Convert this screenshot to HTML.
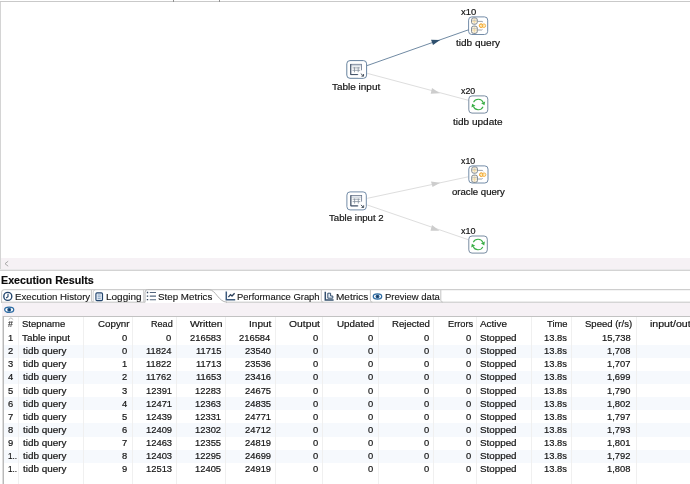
<!DOCTYPE html>
<html><head><meta charset="utf-8"><title>Execution Results</title>
<style>
html,body{margin:0;padding:0;background:#fff;}
body{width:690px;height:484px;position:relative;overflow:hidden;font-family:"Liberation Sans", sans-serif;}
.t{position:absolute;white-space:nowrap;transform-origin:0 50%;display:block;-webkit-text-stroke:0.18px currentColor;}
.abs{position:absolute;}
.vs{position:absolute;top:317px;width:1px;height:167px;background:#f0f0f0;}
.rb{position:absolute;left:4px;width:686px;background:#f6f9fd;}
svg{position:absolute;left:0;top:0;}
</style></head><body>
<div class="abs" style="left:0;top:1px;width:690px;height:1px;background:#c9c9c9"></div>
<div class="abs" style="left:0;top:2px;width:1px;height:268px;background:#d4d4d4"></div>
<div class="abs" style="left:173px;top:0;width:1px;height:2px;background:#8f8f8f"></div>
<div class="abs" style="left:219px;top:0;width:1px;height:2px;background:#8f8f8f"></div>
<div class="abs" style="left:1px;top:258px;width:689px;height:11px;background:#f6f1f5"></div>
<div class="abs" style="left:0;top:269px;width:690px;height:1px;background:#e9e8ea"></div><div class="abs" style="left:0;top:270px;width:690px;height:1px;background:#d3d3d3"></div>
<div class="abs" style="left:2px;top:303px;width:688px;height:13px;background:#f6f1f5"></div>
<div class="abs" style="left:2px;top:316px;width:688px;height:1px;background:#c2c2c2"></div>
<div class="abs" style="left:2px;top:316px;width:1px;height:168px;background:#dedede"></div><div class="abs" style="left:3px;top:316px;width:1px;height:168px;background:#b9b9b9"></div>
<div class="rb" style="top:344.55px;height:13.15px"></div><div class="rb" style="top:370.85px;height:13.15px"></div><div class="rb" style="top:397.15px;height:13.15px"></div><div class="rb" style="top:423.45px;height:13.15px"></div><div class="rb" style="top:449.75px;height:13.15px"></div>
<div class="vs" style="left:18.0px"></div><div class="vs" style="left:82.9px"></div><div class="vs" style="left:132.4px"></div><div class="vs" style="left:175.7px"></div><div class="vs" style="left:225.1px"></div><div class="vs" style="left:274.7px"></div><div class="vs" style="left:322.3px"></div><div class="vs" style="left:377.9px"></div><div class="vs" style="left:433.3px"></div><div class="vs" style="left:475.7px"></div><div class="vs" style="left:531.4px"></div><div class="vs" style="left:571.2px"></div><div class="vs" style="left:635.7px"></div>
<svg width="690" height="484" viewBox="0 0 690 484">
<line x1="367.1" y1="65.6" x2="468.8" y2="29.7" stroke="#607d98" stroke-width="0.9"/><polygon points="440.1,40.0 431.0,39.7 433.0,45.1" fill="#2f506e"/><line x1="367.4" y1="73.4" x2="468.8" y2="100.4" stroke="#dedede" stroke-width="1.0"/><polygon points="432.0,88.0 439.9,93.2 430.7,93.8" fill="#cdcdcd"/><line x1="367.4" y1="198.3" x2="468.3" y2="176.8" stroke="#dedede" stroke-width="1.0"/><polygon points="431.0,181.5 440.3,182.7 432.5,186.9" fill="#cdcdcd"/><line x1="367.4" y1="205.0" x2="468.3" y2="239.7" stroke="#dedede" stroke-width="1.0"/><polygon points="432.0,225.0 439.4,230.7 430.5,230.8" fill="#cdcdcd"/><rect x="346.80" y="60.60" width="19.80" height="17.70" rx="3.2" ry="3.2" fill="#fff" stroke="#66829f" stroke-width="1.0"/><g transform="translate(346.30,60.10)"><rect x="4.45" y="4.2" width="10.8" height="10.3" fill="#fff" stroke="#66748a" stroke-width="0.8"/><path d="M4.9 5.7H14.8" stroke="#aab6c4" stroke-width="0.8" fill="none"/><path d="M8.2 7.1V12.2 M11.9 7.1V12.2 M6.2 7.8H13.9 M6.2 10.2H13.9" stroke="#7d8997" stroke-width="0.75" fill="none"/><path d="M4.45 4.0V14.5H11.4" stroke="#3f4e63" stroke-width="0.95" fill="none"/><rect x="11.9" y="12.4" width="6" height="5" fill="#fff"/><rect x="14.6" y="10.2" width="2" height="4" fill="#fff"/><path d="M14.5 13.5L17.0 15.8 M17.25 13.9V16.05H15.1" stroke="#2e3a48" stroke-width="0.85" fill="none"/></g><rect x="346.90" y="191.90" width="19.40" height="18.00" rx="3.2" ry="3.2" fill="#fff" stroke="#738ca8" stroke-width="1.0"/><g transform="translate(346.40,191.40)"><rect x="4.45" y="4.2" width="10.8" height="10.3" fill="#fff" stroke="#66748a" stroke-width="0.8"/><path d="M4.9 5.7H14.8" stroke="#aab6c4" stroke-width="0.8" fill="none"/><path d="M8.2 7.1V12.2 M11.9 7.1V12.2 M6.2 7.8H13.9 M6.2 10.2H13.9" stroke="#7d8997" stroke-width="0.75" fill="none"/><path d="M4.45 4.0V14.5H11.4" stroke="#3f4e63" stroke-width="0.95" fill="none"/><rect x="11.9" y="12.4" width="6" height="5" fill="#fff"/><rect x="14.6" y="10.2" width="2" height="4" fill="#fff"/><path d="M14.5 13.5L17.0 15.8 M17.25 13.9V16.05H15.1" stroke="#2e3a48" stroke-width="0.85" fill="none"/></g><rect x="468.60" y="16.90" width="19.10" height="17.60" rx="3.2" ry="3.2" fill="#fff" stroke="#738ca8" stroke-width="1.0"/><g transform="translate(468.10,16.40)"><rect x="3.45" y="1.5" width="5.7" height="6.3" rx="2.2" ry="1.7" fill="#fbf2df" stroke="#7d8792" stroke-width="1.0"/><path d="M6.3 2.7V6.8 M4.3 4.95H8.3" stroke="#f1d8a0" stroke-width="0.9"/><path d="M3.6 3.5Q6.3 4.7 9.0 3.5" stroke="#a9b0b8" stroke-width="0.6" fill="none"/><rect x="3.45" y="9.7" width="5.7" height="7.3" rx="2.2" ry="1.7" fill="#fbf2df" stroke="#7d8792" stroke-width="1.0"/><path d="M6.3 10.899999999999999V16.0 M4.3 13.65H8.3" stroke="#f1d8a0" stroke-width="0.9"/><path d="M3.6 11.7Q6.3 12.899999999999999 9.0 11.7" stroke="#a9b0b8" stroke-width="0.6" fill="none"/><path d="M9.8 5.0H14.0L14.9 5.8 M9.8 13.6H13.6L14.4 13.0" stroke="#878d95" stroke-width="0.8" fill="none"/><ellipse cx="13.0" cy="9.3" rx="1.75" ry="1.8" fill="#fdf1c8" stroke="#f4ab3a" stroke-width="0.85"/><ellipse cx="15.8" cy="9.3" rx="1.75" ry="1.8" fill="#fdf1c8" stroke="#f4ab3a" stroke-width="0.85"/><ellipse cx="13.0" cy="9.3" rx="1.75" ry="1.8" fill="none" stroke="#f4ab3a" stroke-width="0.85"/></g><rect x="468.80" y="165.90" width="19.20" height="17.10" rx="3.2" ry="3.2" fill="#fff" stroke="#738ca8" stroke-width="1.0"/><g transform="translate(468.30,165.40)"><rect x="3.45" y="1.5" width="5.7" height="6.3" rx="2.2" ry="1.7" fill="#fbf2df" stroke="#7d8792" stroke-width="1.0"/><path d="M6.3 2.7V6.8 M4.3 4.95H8.3" stroke="#f1d8a0" stroke-width="0.9"/><path d="M3.6 3.5Q6.3 4.7 9.0 3.5" stroke="#a9b0b8" stroke-width="0.6" fill="none"/><rect x="3.45" y="9.7" width="5.7" height="7.3" rx="2.2" ry="1.7" fill="#fbf2df" stroke="#7d8792" stroke-width="1.0"/><path d="M6.3 10.899999999999999V16.0 M4.3 13.65H8.3" stroke="#f1d8a0" stroke-width="0.9"/><path d="M3.6 11.7Q6.3 12.899999999999999 9.0 11.7" stroke="#a9b0b8" stroke-width="0.6" fill="none"/><path d="M9.8 5.0H14.0L14.9 5.8 M9.8 13.6H13.6L14.4 13.0" stroke="#878d95" stroke-width="0.8" fill="none"/><ellipse cx="13.0" cy="9.3" rx="1.75" ry="1.8" fill="#fdf1c8" stroke="#f4ab3a" stroke-width="0.85"/><ellipse cx="15.8" cy="9.3" rx="1.75" ry="1.8" fill="#fdf1c8" stroke="#f4ab3a" stroke-width="0.85"/><ellipse cx="13.0" cy="9.3" rx="1.75" ry="1.8" fill="none" stroke="#f4ab3a" stroke-width="0.85"/></g><rect x="468.80" y="95.90" width="19.00" height="17.20" rx="3.2" ry="3.2" fill="#fff" stroke="#788ca2" stroke-width="1.0"/><path d="M473.54 102.18A5.3 5.3 0 0 1 483.21 102.51" stroke="#3aae46" stroke-width="1.05" fill="none"/><polygon points="484.48,105.36 485.15,101.45 481.13,103.24" fill="#3aae46"/><path d="M483.06 106.82A5.3 5.3 0 0 1 473.39 106.49" stroke="#3aae46" stroke-width="1.05" fill="none"/><polygon points="472.12,103.64 471.45,107.55 475.47,105.76" fill="#3aae46"/><rect x="468.80" y="236.00" width="18.50" height="17.10" rx="3.2" ry="3.2" fill="#fff" stroke="#788ca2" stroke-width="1.0"/><path d="M473.29 242.23A5.3 5.3 0 0 1 482.96 242.56" stroke="#3aae46" stroke-width="1.05" fill="none"/><polygon points="484.23,245.41 484.90,241.50 480.88,243.29" fill="#3aae46"/><path d="M482.81 246.87A5.3 5.3 0 0 1 473.14 246.54" stroke="#3aae46" stroke-width="1.05" fill="none"/><polygon points="471.87,243.69 471.20,247.60 475.22,245.81" fill="#3aae46"/><path d="M8.2 261.2L5.0 263.7L8.2 266.2" stroke="#a0a0a0" stroke-width="0.9" fill="none"/>
<path d="M1.6 303V292.2Q1.6 289.7 4.2 289.7H690" stroke="#c3c3c3" stroke-width="1" fill="none"/><path d="M1.6 302.2H145 M226 302.2H690" stroke="#c3c3c3" stroke-width="1" fill="none"/><path d="M91.4 290V300.2Q91.4 302.2 93.4 302.2" stroke="#c3c3c3" stroke-width="1" fill="none"/><path d="M321.3 290V300.2Q321.3 302.2 323.3 302.2" stroke="#c3c3c3" stroke-width="1" fill="none"/><path d="M370.4 290V300.2Q370.4 302.2 372.4 302.2" stroke="#c3c3c3" stroke-width="1" fill="none"/><path d="M440.8 290V300.2Q440.8 302.2 442.8 302.2" stroke="#c3c3c3" stroke-width="1" fill="none"/><path d="M93.2 302V292Q93.2 290 95.2 290" stroke="#c3c3c3" stroke-width="0.8" fill="none"/><path d="M145 302.4V292.4Q145 289.7 147.6 289.7H209C216 289.7 218 301.8 227 302.2" stroke="#b4b4b4" stroke-width="1" fill="#fff"/><path d="M143.6 290V302" stroke="#c3c3c3" stroke-width="0.8"/><circle cx="7.8" cy="296.4" r="4.0" fill="#fff" stroke="#24466e" stroke-width="1.4"/><path d="M8.0 293.8V296.7L6.1 298.0" stroke="#24466e" stroke-width="1.1" fill="none"/><rect x="95.9" y="292.8" width="6.6" height="7.8" rx="1.1" fill="#e6eef7" stroke="#24466e" stroke-width="1.15"/><path d="M97.7 295H100.7 M97.7 296.8H100.7 M97.7 298.6H100.7" stroke="#6f8fb5" stroke-width="0.8"/><path d="M149.8 292.5H156 M149.8 296.1H156 M149.8 299.7H156" stroke="#52657d" stroke-width="1.1"/><path d="M146.8 292.5H148.2 M146.8 296.1H148.2 M146.8 299.7H148.2" stroke="#33465e" stroke-width="1.3"/><path d="M226.3 291.6V299.7H235.2" stroke="#3c5a7d" stroke-width="1.5" fill="none"/><path d="M228.4 297.2L230.5 294.6L232 296L234.6 293.2" stroke="#2a3f5a" stroke-width="1.25" fill="none"/><path d="M325.3 291.8V300.1H333.6" stroke="#35506f" stroke-width="1.5" fill="none"/><path d="M327.8 293.2H330.6V296H332.8V298.2H327.8Z" fill="#e4edf6" stroke="#35506f" stroke-width="1.0"/><ellipse cx="377.5" cy="296.5" rx="4.2" ry="2.6" fill="#fff" stroke="#2e6da4" stroke-width="1.3"/><circle cx="377.5" cy="296.5" r="2.00" fill="#2b5f93"/><circle cx="377.5" cy="296.5" r="0.9" fill="#16324f"/><ellipse cx="9.2" cy="309.8" rx="4.5" ry="2.6" fill="#fff" stroke="#2e6da4" stroke-width="1.3"/><circle cx="9.2" cy="309.8" r="2.00" fill="#2b5f93"/><circle cx="9.2" cy="309.8" r="0.9" fill="#16324f"/><path d="M8.6 319.6L10.9 317.8L13.2 319.6" stroke="#9a9a9a" stroke-width="0.7" fill="none"/>
</svg>
<div id="txt" style="position:absolute;left:0;top:0;width:690px;height:484px;will-change:transform;">
<span class="t" style="left:332.00px;top:82.72px;font-size:8.6px;line-height:8.6px;transform:scaleX(1.1593);color:#141414;">Table input</span><span class="t" style="left:456.20px;top:39.02px;font-size:8.6px;line-height:8.6px;transform:scaleX(1.1656);color:#141414;">tidb query</span><span class="t" style="left:452.90px;top:117.62px;font-size:8.6px;line-height:8.6px;transform:scaleX(1.1662);color:#141414;">tidb update</span><span class="t" style="left:329.45px;top:214.02px;font-size:8.6px;line-height:8.6px;transform:scaleX(1.1224);color:#141414;">Table input 2</span><span class="t" style="left:451.60px;top:188.32px;font-size:8.6px;line-height:8.6px;transform:scaleX(1.1164);color:#141414;">oracle query</span><span class="t" style="left:460.90px;top:8.32px;font-size:8.6px;line-height:8.6px;transform:scaleX(1.0967);color:#141414;">x10</span><span class="t" style="left:461.20px;top:87.12px;font-size:8.6px;line-height:8.6px;transform:scaleX(1.0246);color:#141414;">x20</span><span class="t" style="left:461.20px;top:156.82px;font-size:8.6px;line-height:8.6px;transform:scaleX(1.0246);color:#141414;">x10</span><span class="t" style="left:461.40px;top:226.62px;font-size:8.6px;line-height:8.6px;transform:scaleX(1.0534);color:#141414;">x10</span><span class="t" style="left:1.00px;top:274.55px;font-size:11.4px;line-height:11.4px;transform:scaleX(0.9397);color:#0c0c0c;font-weight:bold;">Execution Results</span><span class="t" style="left:15.20px;top:292.04px;font-size:9.4px;line-height:9.4px;transform:scaleX(1.0308);color:#141414;-webkit-text-stroke-width:0.12px;">Execution History</span><span class="t" style="left:106.40px;top:292.04px;font-size:9.4px;line-height:9.4px;transform:scaleX(1.0667);color:#141414;-webkit-text-stroke-width:0.12px;">Logging</span><span class="t" style="left:158.20px;top:292.04px;font-size:9.4px;line-height:9.4px;transform:scaleX(1.0440);color:#141414;-webkit-text-stroke-width:0.12px;">Step Metrics</span><span class="t" style="left:237.20px;top:292.04px;font-size:9.4px;line-height:9.4px;transform:scaleX(1.0031);color:#141414;-webkit-text-stroke-width:0.12px;">Performance Graph</span><span class="t" style="left:335.90px;top:292.04px;font-size:9.4px;line-height:9.4px;transform:scaleX(1.0722);color:#141414;-webkit-text-stroke-width:0.12px;">Metrics</span><span class="t" style="left:384.50px;top:292.04px;font-size:9.4px;line-height:9.4px;transform:scaleX(1.0110);color:#141414;-webkit-text-stroke-width:0.12px;">Preview data</span><span class="t" style="left:8.00px;top:319.51px;font-size:9.2px;line-height:9.2px;transform:scaleX(0.9500);color:#333;">#</span><span class="t" style="left:21.80px;top:320.12px;font-size:8.6px;line-height:8.6px;transform:scaleX(1.1049);color:#141414;">Stepname</span><span class="t" style="left:98.10px;top:320.12px;font-size:8.6px;line-height:8.6px;transform:scaleX(1.1371);color:#141414;">Copynr</span><span class="t" style="left:151.00px;top:320.12px;font-size:8.6px;line-height:8.6px;transform:scaleX(1.0561);color:#141414;">Read</span><span class="t" style="left:189.70px;top:320.12px;font-size:8.6px;line-height:8.6px;transform:scaleX(1.2046);color:#141414;">Written</span><span class="t" style="left:249.30px;top:320.12px;font-size:8.6px;line-height:8.6px;transform:scaleX(1.1712);color:#141414;">Input</span><span class="t" style="left:288.70px;top:320.12px;font-size:8.6px;line-height:8.6px;transform:scaleX(1.2010);color:#141414;">Output</span><span class="t" style="left:337.40px;top:320.12px;font-size:8.6px;line-height:8.6px;transform:scaleX(1.1446);color:#141414;">Updated</span><span class="t" style="left:392.40px;top:320.12px;font-size:8.6px;line-height:8.6px;transform:scaleX(1.1173);color:#141414;">Rejected</span><span class="t" style="left:447.50px;top:320.12px;font-size:8.6px;line-height:8.6px;transform:scaleX(1.0766);color:#141414;">Errors</span><span class="t" style="left:547.00px;top:320.12px;font-size:8.6px;line-height:8.6px;transform:scaleX(1.0915);color:#141414;">Time</span><span class="t" style="left:585.30px;top:320.12px;font-size:8.6px;line-height:8.6px;transform:scaleX(1.1078);color:#141414;">Speed (r/s)</span><span class="t" style="left:479.80px;top:320.12px;font-size:8.6px;line-height:8.6px;transform:scaleX(1.1535);color:#141414;">Active</span><span class="t" style="left:649.70px;top:320.12px;font-size:8.6px;line-height:8.6px;transform:scaleX(1.2309);color:#141414;">input/out</span><span class="t" style="left:8.00px;top:333.72px;font-size:8.6px;line-height:8.6px;transform:scaleX(1.0900);color:#141414;">1</span><span class="t" style="left:22.30px;top:333.72px;font-size:8.6px;line-height:8.6px;transform:scaleX(1.1545);color:#141414;">Table input</span><span class="t" style="left:122.39px;top:333.72px;font-size:8.6px;line-height:8.6px;transform:scaleX(1.0900);color:#141414;">0</span><span class="t" style="left:166.49px;top:333.72px;font-size:8.6px;line-height:8.6px;transform:scaleX(1.0900);color:#141414;">0</span><span class="t" style="left:189.73px;top:333.72px;font-size:8.6px;line-height:8.6px;transform:scaleX(1.0900);color:#141414;">216583</span><span class="t" style="left:239.33px;top:333.72px;font-size:8.6px;line-height:8.6px;transform:scaleX(1.0900);color:#141414;">216584</span><span class="t" style="left:312.99px;top:333.72px;font-size:8.6px;line-height:8.6px;transform:scaleX(1.0900);color:#141414;">0</span><span class="t" style="left:368.09px;top:333.72px;font-size:8.6px;line-height:8.6px;transform:scaleX(1.0900);color:#141414;">0</span><span class="t" style="left:423.99px;top:333.72px;font-size:8.6px;line-height:8.6px;transform:scaleX(1.0900);color:#141414;">0</span><span class="t" style="left:466.39px;top:333.72px;font-size:8.6px;line-height:8.6px;transform:scaleX(1.0900);color:#141414;">0</span><span class="t" style="left:480.20px;top:333.72px;font-size:8.6px;line-height:8.6px;transform:scaleX(1.1426);color:#141414;">Stopped</span><span class="t" style="left:543.78px;top:333.72px;font-size:8.6px;line-height:8.6px;transform:scaleX(1.0900);color:#141414;">13.8s</span><span class="t" style="left:602.24px;top:333.72px;font-size:8.6px;line-height:8.6px;transform:scaleX(1.0900);color:#141414;">15,738</span><span class="t" style="left:8.00px;top:346.72px;font-size:8.6px;line-height:8.6px;transform:scaleX(1.0900);color:#141414;">2</span><span class="t" style="left:23.00px;top:346.72px;font-size:8.6px;line-height:8.6px;transform:scaleX(1.1523);color:#141414;">tidb query</span><span class="t" style="left:122.39px;top:346.72px;font-size:8.6px;line-height:8.6px;transform:scaleX(1.0900);color:#141414;">0</span><span class="t" style="left:146.34px;top:346.72px;font-size:8.6px;line-height:8.6px;transform:scaleX(1.0900);color:#141414;">11824</span><span class="t" style="left:195.64px;top:346.72px;font-size:8.6px;line-height:8.6px;transform:scaleX(1.0900);color:#141414;">11715</span><span class="t" style="left:244.54px;top:346.72px;font-size:8.6px;line-height:8.6px;transform:scaleX(1.0900);color:#141414;">23540</span><span class="t" style="left:312.99px;top:346.72px;font-size:8.6px;line-height:8.6px;transform:scaleX(1.0900);color:#141414;">0</span><span class="t" style="left:368.09px;top:346.72px;font-size:8.6px;line-height:8.6px;transform:scaleX(1.0900);color:#141414;">0</span><span class="t" style="left:423.99px;top:346.72px;font-size:8.6px;line-height:8.6px;transform:scaleX(1.0900);color:#141414;">0</span><span class="t" style="left:466.39px;top:346.72px;font-size:8.6px;line-height:8.6px;transform:scaleX(1.0900);color:#141414;">0</span><span class="t" style="left:480.20px;top:346.72px;font-size:8.6px;line-height:8.6px;transform:scaleX(1.1426);color:#141414;">Stopped</span><span class="t" style="left:543.78px;top:346.72px;font-size:8.6px;line-height:8.6px;transform:scaleX(1.0900);color:#141414;">13.8s</span><span class="t" style="left:607.45px;top:346.72px;font-size:8.6px;line-height:8.6px;transform:scaleX(1.0900);color:#141414;">1,708</span><span class="t" style="left:8.00px;top:359.72px;font-size:8.6px;line-height:8.6px;transform:scaleX(1.0900);color:#141414;">3</span><span class="t" style="left:23.00px;top:359.72px;font-size:8.6px;line-height:8.6px;transform:scaleX(1.1523);color:#141414;">tidb query</span><span class="t" style="left:122.39px;top:359.72px;font-size:8.6px;line-height:8.6px;transform:scaleX(1.0900);color:#141414;">1</span><span class="t" style="left:146.34px;top:359.72px;font-size:8.6px;line-height:8.6px;transform:scaleX(1.0900);color:#141414;">11822</span><span class="t" style="left:195.64px;top:359.72px;font-size:8.6px;line-height:8.6px;transform:scaleX(1.0900);color:#141414;">11713</span><span class="t" style="left:244.54px;top:359.72px;font-size:8.6px;line-height:8.6px;transform:scaleX(1.0900);color:#141414;">23536</span><span class="t" style="left:312.99px;top:359.72px;font-size:8.6px;line-height:8.6px;transform:scaleX(1.0900);color:#141414;">0</span><span class="t" style="left:368.09px;top:359.72px;font-size:8.6px;line-height:8.6px;transform:scaleX(1.0900);color:#141414;">0</span><span class="t" style="left:423.99px;top:359.72px;font-size:8.6px;line-height:8.6px;transform:scaleX(1.0900);color:#141414;">0</span><span class="t" style="left:466.39px;top:359.72px;font-size:8.6px;line-height:8.6px;transform:scaleX(1.0900);color:#141414;">0</span><span class="t" style="left:480.20px;top:359.72px;font-size:8.6px;line-height:8.6px;transform:scaleX(1.1426);color:#141414;">Stopped</span><span class="t" style="left:543.78px;top:359.72px;font-size:8.6px;line-height:8.6px;transform:scaleX(1.0900);color:#141414;">13.8s</span><span class="t" style="left:607.45px;top:359.72px;font-size:8.6px;line-height:8.6px;transform:scaleX(1.0900);color:#141414;">1,707</span><span class="t" style="left:8.00px;top:372.72px;font-size:8.6px;line-height:8.6px;transform:scaleX(1.0900);color:#141414;">4</span><span class="t" style="left:23.00px;top:372.72px;font-size:8.6px;line-height:8.6px;transform:scaleX(1.1523);color:#141414;">tidb query</span><span class="t" style="left:122.39px;top:372.72px;font-size:8.6px;line-height:8.6px;transform:scaleX(1.0900);color:#141414;">2</span><span class="t" style="left:146.34px;top:372.72px;font-size:8.6px;line-height:8.6px;transform:scaleX(1.0900);color:#141414;">11762</span><span class="t" style="left:195.64px;top:372.72px;font-size:8.6px;line-height:8.6px;transform:scaleX(1.0900);color:#141414;">11653</span><span class="t" style="left:244.54px;top:372.72px;font-size:8.6px;line-height:8.6px;transform:scaleX(1.0900);color:#141414;">23416</span><span class="t" style="left:312.99px;top:372.72px;font-size:8.6px;line-height:8.6px;transform:scaleX(1.0900);color:#141414;">0</span><span class="t" style="left:368.09px;top:372.72px;font-size:8.6px;line-height:8.6px;transform:scaleX(1.0900);color:#141414;">0</span><span class="t" style="left:423.99px;top:372.72px;font-size:8.6px;line-height:8.6px;transform:scaleX(1.0900);color:#141414;">0</span><span class="t" style="left:466.39px;top:372.72px;font-size:8.6px;line-height:8.6px;transform:scaleX(1.0900);color:#141414;">0</span><span class="t" style="left:480.20px;top:372.72px;font-size:8.6px;line-height:8.6px;transform:scaleX(1.1426);color:#141414;">Stopped</span><span class="t" style="left:543.78px;top:372.72px;font-size:8.6px;line-height:8.6px;transform:scaleX(1.0900);color:#141414;">13.8s</span><span class="t" style="left:607.45px;top:372.72px;font-size:8.6px;line-height:8.6px;transform:scaleX(1.0900);color:#141414;">1,699</span><span class="t" style="left:8.00px;top:386.72px;font-size:8.6px;line-height:8.6px;transform:scaleX(1.0900);color:#141414;">5</span><span class="t" style="left:23.00px;top:386.72px;font-size:8.6px;line-height:8.6px;transform:scaleX(1.1523);color:#141414;">tidb query</span><span class="t" style="left:122.39px;top:386.72px;font-size:8.6px;line-height:8.6px;transform:scaleX(1.0900);color:#141414;">3</span><span class="t" style="left:145.64px;top:386.72px;font-size:8.6px;line-height:8.6px;transform:scaleX(1.0900);color:#141414;">12391</span><span class="t" style="left:194.94px;top:386.72px;font-size:8.6px;line-height:8.6px;transform:scaleX(1.0900);color:#141414;">12283</span><span class="t" style="left:244.54px;top:386.72px;font-size:8.6px;line-height:8.6px;transform:scaleX(1.0900);color:#141414;">24675</span><span class="t" style="left:312.99px;top:386.72px;font-size:8.6px;line-height:8.6px;transform:scaleX(1.0900);color:#141414;">0</span><span class="t" style="left:368.09px;top:386.72px;font-size:8.6px;line-height:8.6px;transform:scaleX(1.0900);color:#141414;">0</span><span class="t" style="left:423.99px;top:386.72px;font-size:8.6px;line-height:8.6px;transform:scaleX(1.0900);color:#141414;">0</span><span class="t" style="left:466.39px;top:386.72px;font-size:8.6px;line-height:8.6px;transform:scaleX(1.0900);color:#141414;">0</span><span class="t" style="left:480.20px;top:386.72px;font-size:8.6px;line-height:8.6px;transform:scaleX(1.1426);color:#141414;">Stopped</span><span class="t" style="left:543.78px;top:386.72px;font-size:8.6px;line-height:8.6px;transform:scaleX(1.0900);color:#141414;">13.8s</span><span class="t" style="left:607.45px;top:386.72px;font-size:8.6px;line-height:8.6px;transform:scaleX(1.0900);color:#141414;">1,790</span><span class="t" style="left:8.00px;top:399.72px;font-size:8.6px;line-height:8.6px;transform:scaleX(1.0900);color:#141414;">6</span><span class="t" style="left:23.00px;top:399.72px;font-size:8.6px;line-height:8.6px;transform:scaleX(1.1523);color:#141414;">tidb query</span><span class="t" style="left:122.39px;top:399.72px;font-size:8.6px;line-height:8.6px;transform:scaleX(1.0900);color:#141414;">4</span><span class="t" style="left:145.64px;top:399.72px;font-size:8.6px;line-height:8.6px;transform:scaleX(1.0900);color:#141414;">12471</span><span class="t" style="left:194.94px;top:399.72px;font-size:8.6px;line-height:8.6px;transform:scaleX(1.0900);color:#141414;">12363</span><span class="t" style="left:244.54px;top:399.72px;font-size:8.6px;line-height:8.6px;transform:scaleX(1.0900);color:#141414;">24835</span><span class="t" style="left:312.99px;top:399.72px;font-size:8.6px;line-height:8.6px;transform:scaleX(1.0900);color:#141414;">0</span><span class="t" style="left:368.09px;top:399.72px;font-size:8.6px;line-height:8.6px;transform:scaleX(1.0900);color:#141414;">0</span><span class="t" style="left:423.99px;top:399.72px;font-size:8.6px;line-height:8.6px;transform:scaleX(1.0900);color:#141414;">0</span><span class="t" style="left:466.39px;top:399.72px;font-size:8.6px;line-height:8.6px;transform:scaleX(1.0900);color:#141414;">0</span><span class="t" style="left:480.20px;top:399.72px;font-size:8.6px;line-height:8.6px;transform:scaleX(1.1426);color:#141414;">Stopped</span><span class="t" style="left:543.78px;top:399.72px;font-size:8.6px;line-height:8.6px;transform:scaleX(1.0900);color:#141414;">13.8s</span><span class="t" style="left:607.45px;top:399.72px;font-size:8.6px;line-height:8.6px;transform:scaleX(1.0900);color:#141414;">1,802</span><span class="t" style="left:8.00px;top:412.72px;font-size:8.6px;line-height:8.6px;transform:scaleX(1.0900);color:#141414;">7</span><span class="t" style="left:23.00px;top:412.72px;font-size:8.6px;line-height:8.6px;transform:scaleX(1.1523);color:#141414;">tidb query</span><span class="t" style="left:122.39px;top:412.72px;font-size:8.6px;line-height:8.6px;transform:scaleX(1.0900);color:#141414;">5</span><span class="t" style="left:145.64px;top:412.72px;font-size:8.6px;line-height:8.6px;transform:scaleX(1.0900);color:#141414;">12439</span><span class="t" style="left:194.94px;top:412.72px;font-size:8.6px;line-height:8.6px;transform:scaleX(1.0900);color:#141414;">12331</span><span class="t" style="left:244.54px;top:412.72px;font-size:8.6px;line-height:8.6px;transform:scaleX(1.0900);color:#141414;">24771</span><span class="t" style="left:312.99px;top:412.72px;font-size:8.6px;line-height:8.6px;transform:scaleX(1.0900);color:#141414;">0</span><span class="t" style="left:368.09px;top:412.72px;font-size:8.6px;line-height:8.6px;transform:scaleX(1.0900);color:#141414;">0</span><span class="t" style="left:423.99px;top:412.72px;font-size:8.6px;line-height:8.6px;transform:scaleX(1.0900);color:#141414;">0</span><span class="t" style="left:466.39px;top:412.72px;font-size:8.6px;line-height:8.6px;transform:scaleX(1.0900);color:#141414;">0</span><span class="t" style="left:480.20px;top:412.72px;font-size:8.6px;line-height:8.6px;transform:scaleX(1.1426);color:#141414;">Stopped</span><span class="t" style="left:543.78px;top:412.72px;font-size:8.6px;line-height:8.6px;transform:scaleX(1.0900);color:#141414;">13.8s</span><span class="t" style="left:607.45px;top:412.72px;font-size:8.6px;line-height:8.6px;transform:scaleX(1.0900);color:#141414;">1,797</span><span class="t" style="left:8.00px;top:425.72px;font-size:8.6px;line-height:8.6px;transform:scaleX(1.0900);color:#141414;">8</span><span class="t" style="left:23.00px;top:425.72px;font-size:8.6px;line-height:8.6px;transform:scaleX(1.1523);color:#141414;">tidb query</span><span class="t" style="left:122.39px;top:425.72px;font-size:8.6px;line-height:8.6px;transform:scaleX(1.0900);color:#141414;">6</span><span class="t" style="left:145.64px;top:425.72px;font-size:8.6px;line-height:8.6px;transform:scaleX(1.0900);color:#141414;">12409</span><span class="t" style="left:194.94px;top:425.72px;font-size:8.6px;line-height:8.6px;transform:scaleX(1.0900);color:#141414;">12302</span><span class="t" style="left:244.54px;top:425.72px;font-size:8.6px;line-height:8.6px;transform:scaleX(1.0900);color:#141414;">24712</span><span class="t" style="left:312.99px;top:425.72px;font-size:8.6px;line-height:8.6px;transform:scaleX(1.0900);color:#141414;">0</span><span class="t" style="left:368.09px;top:425.72px;font-size:8.6px;line-height:8.6px;transform:scaleX(1.0900);color:#141414;">0</span><span class="t" style="left:423.99px;top:425.72px;font-size:8.6px;line-height:8.6px;transform:scaleX(1.0900);color:#141414;">0</span><span class="t" style="left:466.39px;top:425.72px;font-size:8.6px;line-height:8.6px;transform:scaleX(1.0900);color:#141414;">0</span><span class="t" style="left:480.20px;top:425.72px;font-size:8.6px;line-height:8.6px;transform:scaleX(1.1426);color:#141414;">Stopped</span><span class="t" style="left:543.78px;top:425.72px;font-size:8.6px;line-height:8.6px;transform:scaleX(1.0900);color:#141414;">13.8s</span><span class="t" style="left:607.45px;top:425.72px;font-size:8.6px;line-height:8.6px;transform:scaleX(1.0900);color:#141414;">1,793</span><span class="t" style="left:8.00px;top:438.72px;font-size:8.6px;line-height:8.6px;transform:scaleX(1.0900);color:#141414;">9</span><span class="t" style="left:23.00px;top:438.72px;font-size:8.6px;line-height:8.6px;transform:scaleX(1.1523);color:#141414;">tidb query</span><span class="t" style="left:122.39px;top:438.72px;font-size:8.6px;line-height:8.6px;transform:scaleX(1.0900);color:#141414;">7</span><span class="t" style="left:145.64px;top:438.72px;font-size:8.6px;line-height:8.6px;transform:scaleX(1.0900);color:#141414;">12463</span><span class="t" style="left:194.94px;top:438.72px;font-size:8.6px;line-height:8.6px;transform:scaleX(1.0900);color:#141414;">12355</span><span class="t" style="left:244.54px;top:438.72px;font-size:8.6px;line-height:8.6px;transform:scaleX(1.0900);color:#141414;">24819</span><span class="t" style="left:312.99px;top:438.72px;font-size:8.6px;line-height:8.6px;transform:scaleX(1.0900);color:#141414;">0</span><span class="t" style="left:368.09px;top:438.72px;font-size:8.6px;line-height:8.6px;transform:scaleX(1.0900);color:#141414;">0</span><span class="t" style="left:423.99px;top:438.72px;font-size:8.6px;line-height:8.6px;transform:scaleX(1.0900);color:#141414;">0</span><span class="t" style="left:466.39px;top:438.72px;font-size:8.6px;line-height:8.6px;transform:scaleX(1.0900);color:#141414;">0</span><span class="t" style="left:480.20px;top:438.72px;font-size:8.6px;line-height:8.6px;transform:scaleX(1.1426);color:#141414;">Stopped</span><span class="t" style="left:543.78px;top:438.72px;font-size:8.6px;line-height:8.6px;transform:scaleX(1.0900);color:#141414;">13.8s</span><span class="t" style="left:607.45px;top:438.72px;font-size:8.6px;line-height:8.6px;transform:scaleX(1.0900);color:#141414;">1,801</span><span class="t" style="left:8.00px;top:451.72px;font-size:8.6px;line-height:8.6px;transform:scaleX(0.9500);color:#141414;">1..</span><span class="t" style="left:23.00px;top:451.72px;font-size:8.6px;line-height:8.6px;transform:scaleX(1.1523);color:#141414;">tidb query</span><span class="t" style="left:122.39px;top:451.72px;font-size:8.6px;line-height:8.6px;transform:scaleX(1.0900);color:#141414;">8</span><span class="t" style="left:145.64px;top:451.72px;font-size:8.6px;line-height:8.6px;transform:scaleX(1.0900);color:#141414;">12403</span><span class="t" style="left:194.94px;top:451.72px;font-size:8.6px;line-height:8.6px;transform:scaleX(1.0900);color:#141414;">12295</span><span class="t" style="left:244.54px;top:451.72px;font-size:8.6px;line-height:8.6px;transform:scaleX(1.0900);color:#141414;">24699</span><span class="t" style="left:312.99px;top:451.72px;font-size:8.6px;line-height:8.6px;transform:scaleX(1.0900);color:#141414;">0</span><span class="t" style="left:368.09px;top:451.72px;font-size:8.6px;line-height:8.6px;transform:scaleX(1.0900);color:#141414;">0</span><span class="t" style="left:423.99px;top:451.72px;font-size:8.6px;line-height:8.6px;transform:scaleX(1.0900);color:#141414;">0</span><span class="t" style="left:466.39px;top:451.72px;font-size:8.6px;line-height:8.6px;transform:scaleX(1.0900);color:#141414;">0</span><span class="t" style="left:480.20px;top:451.72px;font-size:8.6px;line-height:8.6px;transform:scaleX(1.1426);color:#141414;">Stopped</span><span class="t" style="left:543.78px;top:451.72px;font-size:8.6px;line-height:8.6px;transform:scaleX(1.0900);color:#141414;">13.8s</span><span class="t" style="left:607.45px;top:451.72px;font-size:8.6px;line-height:8.6px;transform:scaleX(1.0900);color:#141414;">1,792</span><span class="t" style="left:8.00px;top:464.72px;font-size:8.6px;line-height:8.6px;transform:scaleX(0.9500);color:#141414;">1..</span><span class="t" style="left:23.00px;top:464.72px;font-size:8.6px;line-height:8.6px;transform:scaleX(1.1523);color:#141414;">tidb query</span><span class="t" style="left:122.39px;top:464.72px;font-size:8.6px;line-height:8.6px;transform:scaleX(1.0900);color:#141414;">9</span><span class="t" style="left:145.64px;top:464.72px;font-size:8.6px;line-height:8.6px;transform:scaleX(1.0900);color:#141414;">12513</span><span class="t" style="left:194.94px;top:464.72px;font-size:8.6px;line-height:8.6px;transform:scaleX(1.0900);color:#141414;">12405</span><span class="t" style="left:244.54px;top:464.72px;font-size:8.6px;line-height:8.6px;transform:scaleX(1.0900);color:#141414;">24919</span><span class="t" style="left:312.99px;top:464.72px;font-size:8.6px;line-height:8.6px;transform:scaleX(1.0900);color:#141414;">0</span><span class="t" style="left:368.09px;top:464.72px;font-size:8.6px;line-height:8.6px;transform:scaleX(1.0900);color:#141414;">0</span><span class="t" style="left:423.99px;top:464.72px;font-size:8.6px;line-height:8.6px;transform:scaleX(1.0900);color:#141414;">0</span><span class="t" style="left:466.39px;top:464.72px;font-size:8.6px;line-height:8.6px;transform:scaleX(1.0900);color:#141414;">0</span><span class="t" style="left:480.20px;top:464.72px;font-size:8.6px;line-height:8.6px;transform:scaleX(1.1426);color:#141414;">Stopped</span><span class="t" style="left:543.78px;top:464.72px;font-size:8.6px;line-height:8.6px;transform:scaleX(1.0900);color:#141414;">13.8s</span><span class="t" style="left:607.45px;top:464.72px;font-size:8.6px;line-height:8.6px;transform:scaleX(1.0900);color:#141414;">1,808</span>
</div>
</body></html>
